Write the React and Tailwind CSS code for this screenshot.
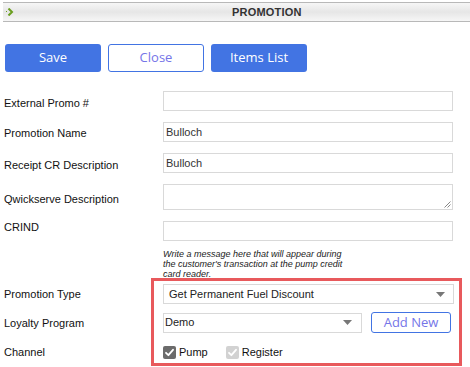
import React from "react";

function Caret() {
  return (
    <svg width="9" height="5" viewBox="0 0 9 5" className="shrink-0">
      <path d="M0 0 H9 L4.5 5 Z" fill="#777" />
    </svg>
  );
}

function Check({ color }) {
  return (
    <svg width="13" height="13" viewBox="0 0 13 13" className="shrink-0">
      <rect x="0" y="0" width="13" height="13" rx="2" fill={color} />
      <path d="M3 6.8 L5.4 9.2 L10 3.8" stroke="#fff" strokeWidth="1.8" fill="none" strokeLinecap="round" strokeLinejoin="round" />
    </svg>
  );
}

export default function App() {
  const label = "w-[159px] shrink-0 leading-[14px]";
  const input = "w-[290px] h-[20px] border border-[#d9d9d9] bg-white px-[2px] text-[11px] leading-[18px] text-[#333]";
  return (
    <div className="relative w-[470px] h-[367px] bg-white overflow-hidden font-['Liberation_Sans',Arial,sans-serif] text-[11px] text-[#111]">
      {/* header */}
      <div className="pt-[2px] pl-[3px]">
        <div className="h-[20px] flex items-center border-t border-b border-[#b8b8b8] bg-[linear-gradient(to_bottom,#f6f6f6,#e6e6e6_50%,#f6f6f6)]">
          <svg width="8" height="8" viewBox="0 0 8 8" className="ml-[3px] shrink-0">
            <rect x="0" y="3" width="1" height="1" fill="#6a9e1f" />
            <path d="M2.5 0.5 L6 4 L2.5 7.5" stroke="#6a9e1f" strokeWidth="2" fill="none" />
          </svg>
          <span className="ml-[218px] font-bold text-[11px] tracking-[0.2px] text-[#333]">PROMOTION</span>
        </div>
      </div>

      {/* buttons */}
      <div className="flex gap-[7px] pl-[5px] pt-[22px] font-['Open_Sans',sans-serif] text-[13px]">
        <div className="w-[96px] h-[28px] rounded-[3px] bg-[#4274e3] text-white flex items-center justify-center">Save</div>
        <div className="w-[96px] h-[28px] rounded-[3px] border border-[#4274e3] bg-white text-[#7575e8] flex items-center justify-center">Close</div>
        <div className="w-[96px] h-[28px] rounded-[3px] bg-[#4274e3] text-white flex items-center justify-center">Items List</div>
      </div>

      {/* form */}
      <div className="pl-[4px] pt-[19px] flex flex-col">
        <div className="flex">
          <div className={`${label} pt-[5px]`}>External Promo #</div>
          <div className={input}></div>
        </div>
        <div className="flex mt-[11px]">
          <div className={`${label} pt-[4px]`}>Promotion Name</div>
          <div className={input}>Bulloch</div>
        </div>
        <div className="flex mt-[11px]">
          <div className={`${label} pt-[5px]`}>Receipt CR Description</div>
          <div className={input}>Bulloch</div>
        </div>
        <div className="flex mt-[11px]">
          <div className={`${label} pt-[8px]`}>Qwickserve Description</div>
          <div className="relative w-[290px] h-[26px] border border-[#d9d9d9] bg-white">
            <svg width="7" height="7" viewBox="0 0 7 7" className="absolute right-[1px] bottom-[1px]">
              <path d="M6.5 0.5 L0.5 6.5 M6.5 3.5 L3.5 6.5" stroke="#888" strokeWidth="1" />
            </svg>
          </div>
        </div>
        <div className="flex mt-[11px]">
          <div className={`${label} -mt-[1px]`}>CRIND</div>
          <div className="flex flex-col">
            <div className={input}></div>
            <div className="mt-[8px] italic text-[9px] leading-[10px] text-[#222]">
              Write a message here that will appear during<br />
              the customer's transaction at the pump credit<br />
              card reader.
            </div>
          </div>
        </div>
        <div className="flex mt-[5px]">
          <div className={`${label} pt-[3px]`}>Promotion Type</div>
          <div className="w-[291px] h-[20px] border border-[#d9d9d9] bg-white flex items-center justify-between pl-[5px] pr-[8px] text-[11px] text-[#222]">
            <span>Get Permanent Fuel Discount</span>
            <Caret />
          </div>
        </div>
        <div className="flex mt-[8px] items-center">
          <div className={`${label} pt-[1px]`}>Loyalty Program</div>
          <div className="w-[199px] h-[20px] border border-[#d9d9d9] bg-white flex items-center justify-between pl-[1px] pr-[9px] text-[11px] text-[#222]">
            <span>Demo</span>
            <Caret />
          </div>
          <div className="ml-[9px] w-[80px] h-[21px] rounded-[3px] border border-[#4274e3] bg-white flex items-center justify-center font-['Open_Sans',sans-serif] text-[13px] text-[#7575e8]">
            Add New
          </div>
        </div>
        <div className="flex mt-[11px] items-center">
          <div className={label}>Channel</div>
          <div className="flex items-center">
            <Check color="#6b6b6b" />
            <span className="ml-[3px] text-[11px]">Pump</span>
            <div className="ml-[18px] flex items-center">
              <Check color="#d2d2d2" />
              <span className="ml-[3px] text-[11px]">Register</span>
            </div>
          </div>
        </div>
      </div>

      {/* red annotation box */}
      <div className="absolute left-[151px] top-[278px] w-[311px] h-[88px] border-[3px] border-[#e8595c] pointer-events-none"></div>
    </div>
  );
}
